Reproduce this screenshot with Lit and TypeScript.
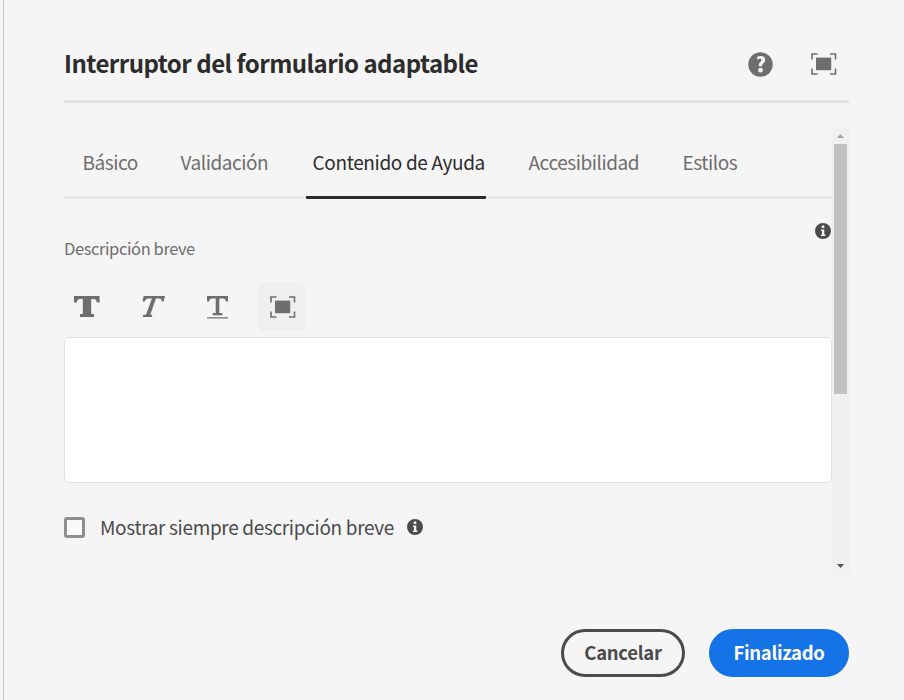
import { LitElement, html, css, svg } from "lit";
import { customElement } from "lit/decorators.js";
import { classMap } from "lit/directives/class-map.js";

const fullscreenIcon = html`<svg width="26" height="24" viewBox="0 0 26 24">
  <path d="M1 6.5V1H6.5M19 1H24.5V6.5M24.5 15.5V21H19M6.5 21H1V15.5" fill="none" stroke="#6e6e6e" stroke-width="1.6"/>
  <rect x="5" y="4.6" width="15.2" height="12.6" fill="#6e6e6e"/>
</svg>`;

const infoIcon = html`<svg class="info" width="16" height="16" viewBox="0 0 16 16">
  <circle cx="8" cy="8" r="8" fill="#4b4b4b"/>
  <path d="M6.7 2.5h2.6v2.5H6.7zM6 6.5h3.3v5h1v1.5H6v-1.5h1V8H6z" fill="#f5f5f5"/>
</svg>`;

const helpIcon = html`<svg width="25" height="25" viewBox="0 0 25 25">
  <circle cx="12.5" cy="12.5" r="12.2" fill="#6e6e6e"/>
  <path d="M8.9 5c1.200-.7 2.500-1.100 4-1.100 2.600 0 4.300 1.500 4.300 3.900 0 1.800-.9 2.800-2.200 3.900-.9.8-1 1.200-.9 2.500H10.900c-.3-2.100.1-3 1.300-4 .9-.8 1.300-1.300 1.300-2.100 0-.9-.6-1.300-1.600-1.300-.9 0-1.700.2-2.500.7z" fill="#f5f5f5"/>
  <circle cx="12.5" cy="18.2" r="2.4" fill="#f5f5f5"/>
</svg>`;

const formatIcons = {
  bold: svg`<path d="M0 0H25.6V6.5H22.800C22.600 4 21.800 3 19.400 3H17.200V18H20V21H6V18H8.800V3H6.400C3.800 3 3 4 2.800 6.500H0z"/>`,
  italic: svg`<path d="M2.600 0H24L22.600 5.600H20.600C20.700 3.600 20.300 2.600 18.300 2.600H14.900L9.300 18.700H11.400L10.700 21H1.700L2.400 18.700H5L10.900 2.600H7.600C5.200 2.600 4.600 3.600 3.700 5.600H1.500z"/>`,
  underline: svg`<path d="M0 0H21V5.600H18.800C18.600 3.600 18 2.600 16.200 2.600H12.300V17H15.300V19.200H5.700V17H8.700V2.600H4.800C3 2.600 2.400 3.600 2.200 5.600H0zM0 21.200H21V22.600H0z"/>`,
};

@customElement("app-root")
export class AppRoot extends LitElement {
  static styles = css`
    :host {
      display: block;
      height: 700px;
      background: #f5f5f5;
      padding-left: 3px;
      box-sizing: border-box;
      overflow: hidden;
      font-family: "Noto Sans CJK SC", "Noto Sans", sans-serif;
      color: #2c2c2c;
      white-space: nowrap;
    }
    * { box-sizing: border-box; }
    svg { display: block; flex: none; }
    .dialog { height: 700px; border-left: 1px solid #c8c8c8; padding: 28px 55px 0 60px; }
    header { height: 75px; border-bottom: 3px solid #e1e1e1; display: flex; align-items: center; }
    h1 { margin: 0 0 2px; flex: 1; font-size: 24px; line-height: 36px; font-weight: 700; letter-spacing: -0.52px; }
    .actions { display: flex; align-items: center; gap: 38px; padding-right: 12px; }
    .actions svg:last-child { margin-top: 2px; }
    .body { margin-top: 24px; height: 448px; display: flex; }
    .content { width: 768px; }
    .tabs { height: 72px; border-bottom: 3px solid #e9e9e9; display: grid; grid-template-columns: 98px 132px 216px 154px auto; padding-left: 18.5px; }
    .tab { height: 72px; line-height: 69px; font-size: 19px; letter-spacing: -0.45px; color: #6e6e6e; justify-self: start; }
    .tab.active { color: #2c2c2c; letter-spacing: -0.36px; margin-left: -7px; padding-left: 7px; width: 180px; border-bottom: 3px solid #2c2c2c; border-radius: 1px; }
    .hint { display: flex; justify-content: flex-end; height: 25px; padding: 24px 1px 0 0; }
    .label { height: 24px; line-height: 24px; margin-top: 12px; font-size: 16.5px; letter-spacing: -0.41px; color: #6e6e6e; }
    .toolbar { display: flex; margin-top: 23px; height: 48px; }
    .tool { width: 65px; height: 48px; padding: 13px 0 0 10px; fill: #6e6e6e; }
    .tool.italic { padding-left: 12px; }
    .tool.underline { padding-left: 13px; }
    .tool.full { width: 48px; background: #efefef; border-radius: 6px; padding: 13px 0 0 12px; margin-left: -1px; }
    .editor { height: 146px; margin-top: 6px; background: #fff; border: 1px solid #e1e1e1; border-radius: 6px; }
    .check { display: flex; align-items: center; height: 28px; margin-top: 30px; font-size: 19px; letter-spacing: -0.34px; color: #4b4b4b; }
    .box { width: 21px; height: 21px; border: 3px solid #8e8e8e; border-radius: 3px; background: #fafafa; margin-right: 15px; }
    .text { width: 307px; line-height: 28px; }
    .scroll { width: 17px; background: #f0f0f0; display: flex; flex-direction: column; align-items: center; justify-content: space-between; padding: 7px 0; }
    .thumb { width: 13px; height: 250px; background: #c1c1c1; margin: 6px 0 auto; }
    footer { display: flex; justify-content: flex-end; gap: 24px; margin-top: 54px; }
    button { height: 48px; border-radius: 24px; font: 700 18.5px/40px "Noto Sans CJK SC", "Noto Sans", sans-serif; letter-spacing: -0.3px; padding: 0 0 3px; }
    .cancel { width: 124px; border: 3px solid #4b4b4b; color: #4b4b4b; background: none; }
    .done { width: 140px; border: 3px solid #1473e6; color: #fff; background: #1473e6; }
  `;

  private tabs = ["Básico", "Validación", "Contenido de Ayuda", "Accesibilidad", "Estilos"];

  render() {
    return html`<div class="dialog">
      <header>
        <h1>Interruptor del formulario adaptable</h1>
        <div class="actions">${helpIcon}${fullscreenIcon}</div>
      </header>
      <div class="body">
        <div class="content">
          <nav class="tabs">
            ${this.tabs.map((t, i) => html`<div class=${classMap({ tab: true, active: i === 2 })}><span>${t}</span></div>`)}
          </nav>
          <div class="hint">${infoIcon}</div>
          <div class="label"><span>Descripción breve</span></div>
          <div class="toolbar">
            <div class="tool"><svg width="26" height="24">${formatIcons.bold}</svg></div>
            <div class="tool italic"><svg width="26" height="24">${formatIcons.italic}</svg></div>
            <div class="tool underline"><svg width="22" height="24">${formatIcons.underline}</svg></div>
            <div class="tool full">${fullscreenIcon}</div>
          </div>
          <div class="editor"></div>
          <div class="check"><div class="box"></div><div class="text">Mostrar siempre descripción breve</div>${infoIcon}</div>
        </div>
        <div class="scroll">
          <svg width="7" height="4"><path d="M3.5 0L7 4H0z" fill="#a3a3a3"/></svg>
          <div class="thumb"></div>
          <svg width="7" height="4"><path d="M0 0H7L3.5 4z" fill="#505050"/></svg>
        </div>
      </div>
      <footer><button class="cancel">Cancelar</button><button class="done">Finalizado</button></footer>
    </div>`;
  }
}
